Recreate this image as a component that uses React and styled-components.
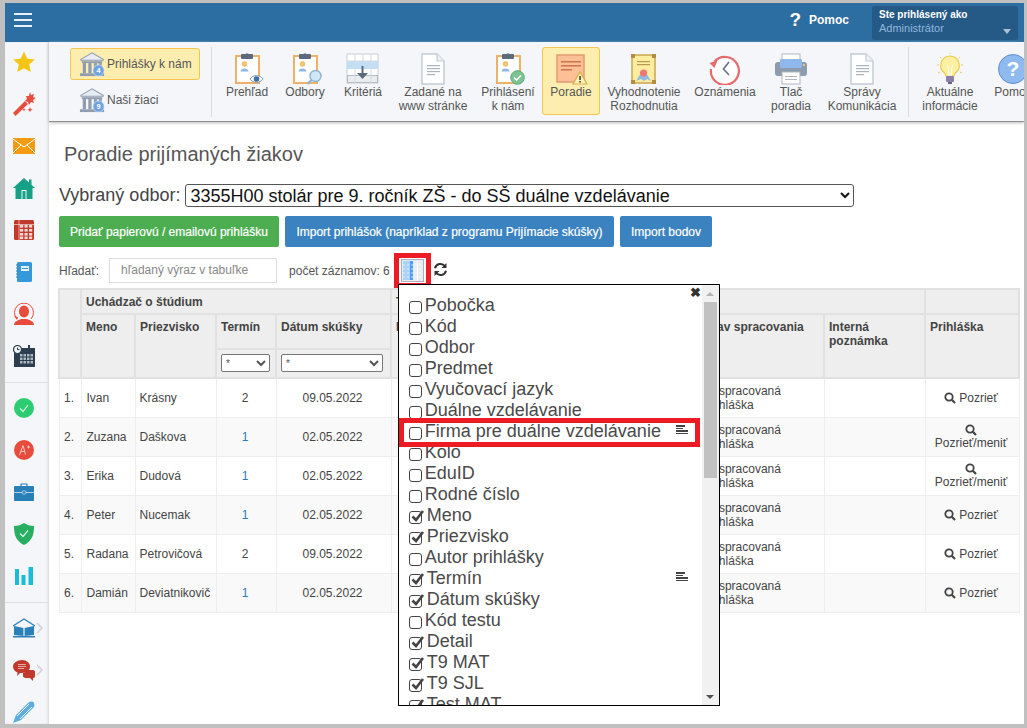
import React from "react";
import styled, { createGlobalStyle } from "styled-components";

const Global = createGlobalStyle`
  html, body { margin: 0; padding: 0; height: 100%; overflow: hidden; }
  body { font-family: "Liberation Sans", Arial, sans-serif; font-size: 12px; color: #444; background: #c0c0c0; }
  * { box-sizing: border-box; }
`;

const Frame = styled.div`
  width: 1027px; height: 728px; padding: 3px 3px 4px 5px; background: #c0c0c0; overflow: hidden;
`;
const Inner = styled.div`
  height: 100%; display: flex; flex-direction: column; background: #fff; overflow: hidden;
`;
const TopBar = styled.header`
  height: 39px; flex: none; background: #2c6da2; display: flex; align-items: center; padding-left: 9px; color: #fff;
`;
const Burger = styled.div`
  width: 18px; margin-bottom: 6px; display: flex; flex-direction: column; gap: 4px;
  span { display: block; height: 2px; background: #e8f0f6; }
`;
const TopHelp = styled.div`
  margin-left: auto; margin-bottom: 6px; display: flex; align-items: center; font-weight: bold; font-size: 12px; margin-right: 23px;
  i { font-style: normal; font-size: 19px; margin-right: 8px; }
`;
const UserBox = styled.div`
  position: relative; width: 146px; height: 34px; margin-right: 6px; background: #265a86; border-radius: 2px; padding: 2px 7px;
  b { display: block; font-size: 10px; line-height: 13px; color: #fff; }
  span { display: block; font-size: 11px; line-height: 15px; color: #8db6dc; }
  &::after { content: ""; position: absolute; right: 7px; bottom: 6px; border: 4px solid transparent; border-top: 5px solid #a9c3da; border-bottom: 0; }
`;
const Body = styled.div`
  flex: 1; display: flex; min-height: 0;
`;
const Side = styled.nav`
  width: 44px; flex: none; background: #f4f6f9; box-shadow: inset -2px 0 3px -1px #d5d5d5; display: flex; flex-direction: column; margin-top: 0;
`;
const SideGroup = styled.div`
  display: flex; flex-direction: column; padding: ${p => (p.$first ? "0" : "4px")} 0 ${p => (p.$last ? "0" : "5px")}; margin-top: ${p => (p.$first ? "-1px" : "0")};
  border-bottom: ${p => (p.$last ? "0" : "1px solid #dcdee1")};
`;
const SideItem = styled.div`
  height: 42px; display: flex; align-items: center; padding-left: 7px; flex: none;
`;
const IconSlot = styled.span`
  width: 24px; flex: none; display: flex; justify-content: center; align-items: center;
`;
const Main = styled.div`
  flex: 1; min-width: 0; display: flex; flex-direction: column;
`;
const Toolbar = styled.div`
  height: 80px; flex: none; background: #f4f6f9; border-bottom: 1px solid #8f8f8f; box-shadow: 0 1px 3px #bbb; display: flex; align-items: center; padding-left: 21px; overflow: hidden;
`;
const LeftTools = styled.div`
  width: 141px; flex: none; display: flex; flex-direction: column; gap: 4px;
`;
const WideBtn = styled.div`
  width: 130px; height: 32px; display: flex; align-items: center; padding-left: 8px; gap: 1px; border-radius: 3px; font-size: 12px;
  color: #555; background: ${p => (p.$on ? "#fdeeb0" : "transparent")}; border: 1px solid ${p => (p.$on ? "#f4c64f" : "transparent")};
`;
const Sep = styled.div`
  width: 1px; height: 70px; flex: none; background: #d9dbde; margin: ${p => p.$m};
`;
const Tool = styled.div`
  width: ${p => p.$w}px; height: 68px; margin-bottom: 2px; flex: none; display: flex; flex-direction: column; align-items: center; padding-top: 5px;
  font-size: 12px; line-height: 14px; text-align: center; color: #555; border-radius: 3px; white-space: nowrap;
  background: ${p => (p.$on ? "#fdeeb0" : "transparent")}; border: 1px solid ${p => (p.$on ? "#f4c64f" : "transparent")};
  svg { flex: none; }
`;
const Content = styled.main`
  flex: 1; padding: 0 0 0 10px; position: relative; min-height: 0;
`;
const Title = styled.h1`
  margin: 0; padding: 20px 0 0 5px; font-size: 20px; line-height: 24px; font-weight: normal; color: #555;
`;
const OdborRow = styled.div`
  margin-top: 18px; display: flex; align-items: center; height: 23px; font-size: 18px; color: #444;
`;
const OdborSelect = styled.select`
  width: 669px; height: 23px; margin-left: 5px; font-family: "Liberation Sans", Arial, sans-serif; font-size: 18px; color: #111; background: #fff; border: 1px solid #555; border-radius: 3px; padding: 0;
`;
const Buttons = styled.div`
  margin-top: 9px; display: flex; gap: 6px;
`;
const Btn = styled.div`
  height: 31px; display: flex; align-items: center; justify-content: center; width: ${p => p.$w}px; color: #fff; font-size: 12px; font-weight: 500;
  -webkit-text-stroke: 0.2px #fff; border-radius: 2px; background: ${p => (p.$green ? "#4cae50" : "#3a83c0")};
`;
const SearchRow = styled.div`
  margin-top: 11px; height: 25px; display: flex; align-items: center; color: #555; position: relative;
`;
const SearchInput = styled.div`
  width: 168px; height: 25px; margin-left: 10px; border: 1px solid #ddd; padding-left: 11px; line-height: 23px; color: #888;
`;
const Count = styled.span`
  margin-left: 12px;
`;
const ColumnsBtn = styled.div`
  position: relative; align-self: flex-start; width: 37px; height: 35px; margin: -5px 0 0 4px; flex: none; border: 5px solid #ed1c24; display: flex; align-items: center; justify-content: center;
`;
const Refresh = styled.div`
  margin: 0 0 3px 2px; display: flex;
`;
const TableWrap = styled.div`
  margin: 5px 0 0 -1px;
`;
const Table = styled.table`
  width: 960px; table-layout: fixed; border-collapse: collapse; border: 1px solid #e5e5e5;
`;
const Th = styled.th`
  background: #eee; border: 2px solid #e1e1e1; padding: ${p => (p.$filter ? "4px 4px 0" : "5px 4px 4px")}; vertical-align: top; text-align: left; font-size: 12px; line-height: 14px; color: #444; font-weight: bold; height: ${p => p.$h}px; white-space: ${p => (p.$wrap ? "normal" : "nowrap")}; overflow: hidden;
`;
const Td = styled.td`
  height: 39px; border: 1px solid #eee; padding: 0 6px 0 ${p => p.$pl || 4}px; font-size: 12px; line-height: 14px; color: #444; overflow: hidden; white-space: nowrap;
  text-align: ${p => p.$align || "left"}; background: ${p => (p.$odd ? "#f9f9f9" : "#fff")};
`;
const Link = styled.span`
  color: #337ab7;
`;
const FilterSelect = styled.select`
  display: block; width: ${p => p.$w}px; height: 18px; font-size: 10px; font-family: "Liberation Sans", Arial, sans-serif; background: #fff; border: 1px solid #767676; border-radius: 2px; padding: 0; color: #555;
`;
const View = styled.div`
  display: flex; justify-content: center; align-items: center; flex-direction: ${p => (p.$stack ? "column" : "row")};
  line-height: 14px; gap: ${p => (p.$stack ? "0" : "3px")};
`;
const Popup = styled.div`
  position: absolute; left: -1px; top: 26px; width: 322px; height: 422px; z-index: 5; background: #fff; border: 1px solid #000; display: flex;
`;
const List = styled.div`
  flex: 1; min-width: 0; padding: 10px 0 0 10px; overflow: hidden; position: relative;
`;
const CloseX = styled.div`
  position: absolute; right: 1px; top: 1px; font-size: 13px; line-height: 13px; font-weight: bold; color: #333;
`;
const Item = styled.div`
  height: 21px; display: flex; align-items: center; font-size: 18px; line-height: 21px; color: #4a4a4a; white-space: nowrap; position: relative; flex: none;
`;
const Box = styled.span`
  width: 13px; height: 13px; flex: none; margin: 3px ${p => (p.$checked ? 5 : 3)}px 0 0; border: 1px solid #444; border-radius: 3px; position: relative; background: #fff; display: inline-block;
  svg { position: absolute; left: 0; top: -3px; }
`;
const Lines = styled.span`
  position: absolute; right: 14px; top: 4px; display: flex; flex-direction: column; gap: 1px;
`;
const Line = styled.i`
  display: block; height: 1.5px; background: #444; width: ${p => p.$w}px;
`;
const Scrollbar = styled.div`
  width: 17px; flex: none; background: #f1f1f1; display: flex; flex-direction: column; align-items: center; padding: 0 2px;
`;
const Arrow = styled.div`
  height: 17px; flex: none; width: 100%; display: flex; align-items: center; justify-content: center;
  &::after { content: ""; border: 4px solid transparent; ${p => (p.$up ? "border-bottom: 4px solid #b5b5b5; border-top: 0;" : "border-top: 4px solid #505050; border-bottom: 0;")} }
`;
const Thumb = styled.div`
  width: 100%; height: 176px; background: #c1c1c1; flex: none;
`;
const Track = styled.div`
  flex: 1;
`;
const Highlight = styled.div`
  position: absolute; left: 0; top: 133px; width: 301px; height: 29px; border: 5px solid #ed1c24; z-index: 6; pointer-events: none;
`;

/* ---------- drawn icons ---------- */
const Bank = ({ n }) => (
  <svg width="27" height="26" viewBox="0 0 29 28">
    <path d="M2 9 14 2l12 7v1H2z" fill="#e8edf3" stroke="#8f9db0" strokeWidth="1.2" />
    <rect x="3" y="11" width="22" height="2" fill="#8f9db0" />
    {[4, 10, 16, 21].map(x => <rect key={x} x={x} y="13" width="3.5" height="11" fill="#8f9db0" />)}
    <rect x="1" y="24" width="26" height="3" fill="#8f9db0" />
    <circle cx="21" cy="21" r="6" fill="#6ea2e0" stroke="#dde8f6" strokeWidth=".7" />
    <text x="21" y="24" fontSize="8" fontWeight="bold" textAnchor="middle" fill="#fff" fontFamily="Liberation Sans">{n}</text>
  </svg>
);
const Clip = ({ children }) => (
  <svg width="34" height="32" viewBox="0 0 34 32">
    <rect x="6" y="3" width="23" height="27" fill="#fff" stroke="#eeb168" strokeWidth="2" />
    <rect x="11" y="1" width="12" height="5" rx="1" fill="#5d6a7c" />
    <circle cx="17" cy="1.8" r="1.6" fill="#5d6a7c" />
    <circle cx="14.5" cy="11" r="2.4" fill="#f6c66a" stroke="#d8a24c" strokeWidth=".5" />
    <path d="M10.500 18.500c0-4 8-4 8 0z" fill="#8db8e8" />
    {children}
  </svg>
);
const Doc = () => (
  <svg width="30" height="32" viewBox="0 0 30 32">
    <path d="M4 1h15l7 7v23H4z" fill="#fff" stroke="#c3cbd5" strokeWidth="1.5" />
    <path d="M19 1v7h7" fill="#eef1f4" stroke="#c3cbd5" strokeWidth="1.2" />
    {[12, 15, 18, 21].map((y, i) => <rect key={y} x="9" y={y} width={i === 3 ? 8 : 13} height="1.2" fill="#aab3bd" />)}
  </svg>
);
const GridIcon = () => (
  <svg width="34" height="32" viewBox="0 0 34 32">
    <rect x="1" y="1" width="31" height="29" fill="#fff" stroke="#c8ced6" />
    <rect x="1" y="8" width="31" height="8" fill="#c2def5" />
    <rect x="1" y="22" width="31" height="8" fill="#b6bcc4" />
    <rect x="2" y="23" width="29" height="6" fill="#e9edf0" />
    <path d="M9 1v29M17 1v9M25 1v29M1 8h31" stroke="#d5dae0" fill="none" />
    <path d="M16.5 13v11" stroke="#5d6a7c" strokeWidth="2" />
    <path d="M11 20l5.500 6 5.500-6z" fill="#5d6a7c" />
  </svg>
);
const PoradieIcon = () => (
  <svg width="34" height="32" viewBox="0 0 34 32">
    <rect x="3" y="2" width="27" height="27" fill="#fdbf95" stroke="#e39a72" strokeWidth="1.500" />
    <rect x="7" y="8" width="20" height="1.500" fill="#c9774f" />
    <rect x="7" y="12" width="20" height="1.500" fill="#c9774f" />
    <rect x="7" y="16" width="11" height="1.500" fill="#c9774f" />
    <path d="M26 19l7 12H19z" fill="#fdf2b5" stroke="#d8ad4a" strokeWidth="1.200" />
    <rect x="25.300" y="23" width="1.500" height="4" fill="#333" />
    <rect x="25.300" y="28" width="1.500" height="1.500" fill="#333" />
  </svg>
);
const CertIcon = () => (
  <svg width="30" height="32" viewBox="0 0 30 32">
    <rect x="3" y="2" width="23" height="28" fill="#fdeda0" stroke="#c8a04a" strokeWidth="1.400" />
    <rect x="2" y="1" width="4" height="4" fill="#b38c3e" />
    <rect x="23" y="1" width="4" height="4" fill="#b38c3e" />
    <rect x="2" y="27" width="4" height="4" fill="#b38c3e" />
    <rect x="23" y="27" width="4" height="4" fill="#b38c3e" />
    <rect x="8" y="8" width="13" height="1.200" fill="#b79a52" />
    <rect x="8" y="11" width="13" height="1.200" fill="#b79a52" />
    <path d="M7 28l5-8h5l5 8-4-2-3 2-3-2z" fill="#8dbbe6" />
    <circle cx="14.500" cy="20" r="3.500" fill="#ee7674" />
  </svg>
);
const ClockIcon = () => (
  <svg width="34" height="32" viewBox="0 0 34 32">
    <path d="M6.500 8.500A14 14 0 1 1 3 16" fill="#fff" stroke="#e9686a" strokeWidth="2.200" />
    <path d="M1.500 10l8-2.500-3 7.500z" fill="#e9686a" />
    <path d="M21 9l-5.500 7 5.500 6" fill="none" stroke="#6a7889" strokeWidth="1.700" />
  </svg>
);
const Printer = () => (
  <svg width="34" height="32" viewBox="0 0 34 32">
    <rect x="8" y="1" width="18" height="9" fill="#fff" stroke="#aeb7c2" />
    <rect x="1" y="9" width="32" height="14" rx="3" fill="#8c9bad" />
    <rect x="6" y="6" width="22" height="9" rx="1" fill="#8fb9ec" />
    <rect x="8" y="19" width="18" height="12" fill="#fff" stroke="#aeb7c2" />
    <rect x="11" y="23" width="12" height="1" fill="#aeb7c2" />
    <rect x="11" y="26" width="12" height="1" fill="#aeb7c2" />
    <circle cx="30" cy="12" r="1" fill="#f3d76a" />
  </svg>
);
const Bulb = () => (
  <svg width="34" height="32" viewBox="0 0 34 32">
    <path d="M17 3a9.500 9.500 0 0 0-5.500 17c.8.8 1.500 2 1.500 3h8c0-1 .7-2.200 1.500-3A9.500 9.500 0 0 0 17 3z" fill="#fdf0a0" stroke="#e8cc58" strokeWidth="1.200" />
    <path d="M14 12c1.500 2 1.500 6 2 11M20 12c-1.500 2-1.500 6-2 11" stroke="#fff" fill="none" />
    <rect x="13" y="23" width="8" height="6" rx="1" fill="#8c7fa8" />
    <rect x="15" y="29" width="4" height="2" fill="#6e628a" />
    <path d="M4 12h2M28 12h2M7 4l1.500 1.500M27 4l-1.500 1.500M17 0v1M5 20l2-1M29 20l-2-1" stroke="#e8cc58" />
  </svg>
);
const HelpCircle = () => (
  <svg width="32" height="32" viewBox="0 0 32 32">
    <circle cx="16" cy="16" r="14.500" fill="#8ebaf0" stroke="#5e8fd0" />
    <text x="16" y="23" fontSize="21" fontWeight="bold" textAnchor="middle" fill="#fff" fontFamily="Liberation Sans">?</text>
  </svg>
);
const Magnifier = ({ size = 12 }) => (
  <svg width={size} height={size} viewBox="0 0 12 12">
    <circle cx="5" cy="5" r="3.700" fill="none" stroke="#444" strokeWidth="1.800" />
    <path d="M7.800 7.800 11 11" stroke="#444" strokeWidth="2.200" />
  </svg>
);

const Star = () => (<svg width="24" height="24" viewBox="0 0 24 24"><path d="M12 1.500l3.200 7 7.600.9-5.600 5.200 1.500 7.500L12 18.300 5.300 22.100l1.500-7.500L1.200 9.400l7.600-.9z" fill="#f5c516" /></svg>);
const Wand = () => (<svg width="24" height="24" viewBox="0 0 24 24"><path d="M1 21 13 9l3 3L3.500 24z" fill="#e74c3c" /><path d="M18 0l1 3 3-1-1 3 3 1-3 2 1 3-3-1-2 3-1-3-3-1 2-2-1-3 3 0z" fill="#e74c3c" /><path d="M18 15l.7 2 2 .7-2 .7-.7 2-.7-2-2-.7 2-.7zM12 16l.5 1.300 1.300.5-1.300.5-.5 1.300-.5-1.300-1.300-.5 1.300-.5z" fill="#e74c3c" /></svg>);
const Mail = () => (<svg width="22" height="16" viewBox="0 0 22 16"><rect width="22" height="16" fill="#f39c12" /><path d="M0 1l11 8 11-8M0 15l8-8M22 15l-8-8" fill="none" stroke="#fff" strokeWidth="1" /></svg>);
const House = () => (<svg width="22" height="21" viewBox="0 0 22 21"><path d="M11 0l5 4.500V1.500h2.500v5.300L22 10h-2.500v11h-17V10H0z" fill="#16a085" /><rect x="8.500" y="12" width="5" height="9" fill="#f4f6f9" /><rect x="9.500" y="13" width="3" height="8" fill="#16a085" /></svg>);
const RedCal = () => (<svg width="20" height="20" viewBox="0 0 20 20"><rect width="20" height="20" rx="1.500" fill="#c0392b" />{[6, 10.500, 15].map(x => [5, 9, 13, 16.500].map(y => <rect key={x + "-" + y} x={x} y={y} width="3.200" height="2.600" fill="#f0d8d5" />))}<path d="M0 4.500h20M5 0v20" stroke="#f4f6f9" strokeWidth=".6" /></svg>);
const Notebook = () => (<svg width="16" height="20" viewBox="0 0 16 20"><rect x="1" y="0" width="15" height="20" rx="1.500" fill="#3498db" /><rect x="5" y="4" width="8" height="5" fill="#e8f3fb" /><rect x="6" y="6" width="6" height="1" fill="#3498db" /><path d="M0 3h2M0 6h2M0 9h2M0 12h2M0 15h2" stroke="#2a7cb5" strokeWidth="1" /></svg>);
const Person = () => (<svg width="22" height="22" viewBox="0 0 22 22"><path d="M4 16a9.500 9.500 0 1 1 14 0" fill="none" stroke="#e74c3c" strokeWidth="1" /><ellipse cx="11" cy="8.500" rx="5" ry="6" fill="#e74c3c" /><path d="M1 22c0-4 5-5 7-6h6c2 1 7 2 7 6z" fill="#e74c3c" /><path d="M1 13l3 4 1-3z" fill="#e74c3c" /></svg>);
const DarkCal = () => (<svg width="22" height="22" viewBox="0 0 22 22"><rect x="1" y="3" width="21" height="19" fill="#2c3e50" />{[9, 12.500, 16].map(y => [7, 10.500, 14, 17.500].map(x => <rect key={x + "-" + y} x={x} y={y} width="2.500" height="2.500" fill="#aeb6bf" />))}<circle cx="4.500" cy="4.500" r="4" fill="#f4f6f9" stroke="#2c3e50" strokeWidth="1.200" /><path d="M4.500 2.500v2.200h2" fill="none" stroke="#2c3e50" /><rect x="15" y="0" width="2" height="5" fill="#2c3e50" /></svg>);
const CheckCircle = () => (<svg width="20" height="20" viewBox="0 0 20 20"><circle cx="10" cy="10" r="10" fill="#2ecc71" /><path d="M6 10.500l3 3 5-6.500" fill="none" stroke="#d5f5e3" strokeWidth="1.200" /></svg>);
const APlus = () => (<svg width="20" height="20" viewBox="0 0 20 20"><circle cx="10" cy="10" r="10" fill="#e74c3c" /><path d="M5.500 15 9 5.500l2.500 9M6.800 11.500h4M13 7h3M14.500 5.500v3" fill="none" stroke="#f6c8c2" strokeWidth="1" /></svg>);
const Case = () => (<svg width="20" height="18" viewBox="0 0 20 18"><path d="M7 3V1h6v2" fill="none" stroke="#2980b9" strokeWidth="1.200" /><rect y="3" width="20" height="15" rx="1" fill="#2980b9" /><path d="M0 9.500h20" stroke="#d6e7f3" strokeWidth=".8" /><rect x="8" y="8" width="4" height="3" rx="1" fill="#2980b9" stroke="#d6e7f3" strokeWidth=".7" /></svg>);
const Shield = () => (<svg width="20" height="22" viewBox="0 0 20 22"><path d="M10 0c3 2 6 3 10 3 0 9-2 15-10 19C2 18 0 12 0 3c4 0 7-1 10-3z" fill="#27ae60" /><path d="M6 10.500l3 3 5-6" fill="none" stroke="#d5f5e3" strokeWidth="1.200" /></svg>);
const Bars = () => (<svg width="18" height="18" viewBox="0 0 18 18"><rect y="2" width="4" height="16" fill="#1abcd8" /><rect x="6.500" y="8" width="4" height="10" fill="#1abcd8" /><rect x="13.500" y="0" width="4.500" height="18" fill="#1abcd8" /></svg>);
const Chevron = () => (<svg width="7" height="14" viewBox="0 0 7 14"><path d="M1 2l5 5-5 5" fill="none" stroke="#ccd0d5" strokeWidth="1.500" /></svg>);
const Book = () => (<svg width="22" height="20" viewBox="0 0 22 20"><path d="M0 8 11 1l11 7" fill="none" stroke="#2980b9" strokeWidth="1.300" /><path d="M1 8l9.400 2v8L1 17zM21 8l-9.400 2v8l9.400-1z" fill="#2980b9" /><rect x="0" y="18" width="22" height="1.500" fill="#2980b9" /></svg>);
const Chat = () => (<svg width="22" height="21" viewBox="0 0 22 21"><path d="M9 0c5 0 8 3 8 6.500S14 13 9 13H7l-3 3 .5-3.500C2 11.500 0 9.500 0 6.500 0 3 4 0 9 0z" fill="#c0392b" /><path d="M13 10h7c1.500 0 2 1 2 2v4c0 1-.5 2-2 2v3l-3-3h-4c-2 0-3-1-3-2v-3c2 0 3-2 3-3z" fill="#c0392b" /><path d="M5 4.500h8M5 6.500h8M5 8.500h6" stroke="#eec5c0" strokeWidth=".8" /></svg>);
const Pen = () => (<svg width="22" height="22" viewBox="0 0 22 22"><path d="M0 22l3-8L15 2c2-2 5-2 6 0s0 4-1 5L8 19z" fill="#5dade2" /><path d="M4 15 16 3M7 18 19 6" stroke="#f4f6f9" strokeWidth="1" /></svg>);

const ColIcon = () => (
  <svg width="23" height="23" viewBox="0 0 23 23">
    <rect x=".5" y=".5" width="22" height="22" fill="#e8ebef" stroke="#a9b2bc" />
    <rect x="2" y="2" width="7" height="19" fill="#a8d2f7" />
    <rect x="9" y="2" width="3" height="19" fill="#4c9eec" />
    <path d="M2 6h19M2 10h19M2 14h19M2 18h19" stroke="#fff" strokeOpacity=".7" strokeDasharray="2 2" />
    <path d="M16.500 2v19" stroke="#fff" strokeOpacity=".8" />
  </svg>
);
const RefreshIcon = () => (
  <svg width="15" height="15" viewBox="0 0 15 15">
    <path d="M2 6.300A5.600 5.600 0 0 1 12 4.300" fill="none" stroke="#333" strokeWidth="2" />
    <path d="M13.500 1v5h-5z" fill="#333" />
    <path d="M13 8.700A5.600 5.600 0 0 1 3 10.700" fill="none" stroke="#333" strokeWidth="2" />
    <path d="M1.500 14V9h5z" fill="#333" />
  </svg>
);
const Tick = () => (
  <svg width="15" height="14" viewBox="0 0 15 14"><path d="M2.500 7.500 6 11l7-9" fill="none" stroke="#444" strokeWidth="2.600" /></svg>
);

const tools = [
  { w: 58, l: ["Prehľad"], icon: <Clip><path d="M20 26c3-4.500 10-4.500 13 0-3 4.500-10 4.500-13 0z" fill="#fff" stroke="#8a9aa8" /><circle cx="26.500" cy="26" r="2.800" fill="#3f6fa8" /></Clip> },
  { w: 58, l: ["Odbory"], icon: <Clip><circle cx="27.500" cy="23" r="5.500" fill="#cfe7f8" stroke="#8fb3cf" strokeWidth="1.400" /><path d="M23.500 27l-4 4" stroke="#8fb3cf" strokeWidth="2.400" /></Clip> },
  { w: 58, l: ["Kritériá"], icon: <GridIcon /> },
  { w: 82, l: ["Zadané na", "www stránke"], icon: <Doc /> },
  { w: 68, l: ["Prihlásení", "k nám"], icon: <Clip><circle cx="26.500" cy="24.500" r="6.800" fill="#7bc492" stroke="#5aa874" /><path d="M23 24.500l2.500 2.500 4.500-4.500" fill="none" stroke="#fff" strokeWidth="1.600" /></Clip> },
  { w: 58, l: ["Poradie"], on: true, icon: <PoradieIcon /> },
  { w: 88, l: ["Vyhodnotenie", "Rozhodnutia"], icon: <CertIcon /> },
  { w: 74, l: ["Oznámenia"], icon: <ClockIcon /> },
  { w: 58, l: ["Tlač", "poradia"], icon: <Printer /> },
  { w: 84, l: ["Správy", "Komunikácia"], icon: <Doc /> },
];

const sideGroups = [
  [[<Star />], [<Wand />], [<Mail />], [<House />], [<RedCal />], [<Notebook />], [<Person />], [<DarkCal />]],
  [[<CheckCircle />], [<APlus />], [<Case />], [<Shield />], [<Bars />]],
  [[<Book />, true], [<Chat />, true], [<Pen />]],
];

const rows = [
  ["Ivan", "Krásny", 2, "09.05.2022", false],
  ["Zuzana", "Daškova", 1, "02.05.2022", true],
  ["Erika", "Dudová", 1, "02.05.2022", true],
  ["Peter", "Nucemak", 1, "02.05.2022", false],
  ["Radana", "Petrovičová", 2, "09.05.2022", false],
  ["Damián", "Deviatnikovič", 1, "02.05.2022", false],
];

const columns = [
  ["Pobočka"], ["Kód"], ["Odbor"], ["Predmet"], ["Vyučovací jazyk"], ["Duálne vzdelávanie"],
  ["Firma pre duálne vzdelávanie", false, true], ["Kolo"], ["EduID"], ["Rodné číslo"],
  ["Meno", true], ["Priezvisko", true], ["Autor prihlášky"], ["Termín", true, true],
  ["Dátum skúšky", true], ["Kód testu"], ["Detail", true], ["T9 MAT", true], ["T9 SJL", true], ["Test MAT", true],
];

const colWidths = [22, 54, 81, 60, 115, 60, 80, 80, 89, 124, 101, 94];

export default function App() {
  return (
    <Frame>
      <Global />
      <Inner>
        <TopBar>
          <Burger><span /><span /><span /></Burger>
          <TopHelp><i>?</i>Pomoc</TopHelp>
          <UserBox><b>Ste prihlásený ako</b><span>Administrátor</span></UserBox>
        </TopBar>
        <Body>
          <Side>
            {sideGroups.map((g, i) => (
              <SideGroup key={i} $first={i === 0} $last={i === 2}>
                {g.map(([ic, more], j) => (
                  <SideItem key={j}>
                    <IconSlot>{ic}</IconSlot>
                    {more && <Chevron />}
                  </SideItem>
                ))}
              </SideGroup>
            ))}
          </Side>
          <Main>
            <Toolbar>
              <LeftTools>
                <WideBtn $on><Bank n="4" />Prihlášky k nám</WideBtn>
                <WideBtn><Bank n="9" />Naši žiaci</WideBtn>
              </LeftTools>
              <Sep $m="0 6px 0 0" />
              {tools.map(t => (
                <Tool key={t.l[0]} $w={t.w} $on={t.on}>
                  {t.icon}
                  {t.l.map(x => <span key={x}>{x}</span>)}
                </Tool>
              ))}
              <Sep $m="0 3px 0 4px" />
              <Tool $w={76}><Bulb /><span>Aktuálne</span><span>informácie</span></Tool>
              <Tool $w={50}><HelpCircle /><span>Pomoc</span></Tool>
            </Toolbar>
            <Content>
              <Title>Poradie prijímaných žiakov</Title>
              <OdborRow>
                Vybraný odbor:
                <OdborSelect defaultValue="a"><option value="a">3355H00 stolár pre 9. ročník ZŠ - do SŠ duálne vzdelávanie</option></OdborSelect>
              </OdborRow>
              <Buttons>
                <Btn $green $w={220}>Pridať papierovú / emailovú prihlášku</Btn>
                <Btn $w={329}>Import prihlášok (napríklad z programu Prijímacie skúšky)</Btn>
                <Btn $w={92}>Import bodov</Btn>
              </Buttons>
              <SearchRow>
                Hľadať:
                <SearchInput>hľadaný výraz v tabuľke</SearchInput>
                <Count>počet záznamov: 6</Count>
                <ColumnsBtn>
                  <ColIcon />
                  <Popup>
                    <List>
                      <CloseX>✖</CloseX>
                      {columns.map(([name, checked, lines]) => (
                        <Item key={name}>
                          <Box $checked={checked}>{checked && <Tick />}</Box>
                          {name}
                          {lines && <Lines><Line $w={9} /><Line $w={7} /><Line $w={12} /><Line $w={12} /></Lines>}
                        </Item>
                      ))}
                    </List>
                    <Scrollbar>
                      <Arrow $up />
                      <Thumb />
                      <Track />
                      <Arrow />
                    </Scrollbar>
                    <Highlight />
                  </Popup>
                </ColumnsBtn>
                <Refresh><RefreshIcon /></Refresh>
              </SearchRow>
              <TableWrap>
                <Table>
                  <colgroup>{colWidths.map((w, i) => <col key={i} style={{ width: w }} />)}</colgroup>
                  <thead>
                    <tr>
                      <Th rowSpan={3} />
                      <Th colSpan={4} $h={25}>Uchádzač o štúdium</Th>
                      <Th colSpan={4}>Testy</Th>
                      <Th colSpan={2} />
                      <Th />
                    </tr>
                    <tr>
                      <Th rowSpan={2}>Meno</Th>
                      <Th rowSpan={2}>Priezvisko</Th>
                      <Th $h={35}>Termín</Th>
                      <Th>Dátum skúšky</Th>
                      <Th rowSpan={2}>Detail</Th>
                      <Th rowSpan={2}>T9 MAT</Th>
                      <Th rowSpan={2}>T9 SJL</Th>
                      <Th rowSpan={2}>Test MAT</Th>
                      <Th rowSpan={2}>Stav spracovania</Th>
                      <Th rowSpan={2} $wrap>Interná poznámka</Th>
                      <Th rowSpan={2}>Prihláška</Th>
                    </tr>
                    <tr>
                      <Th $filter $h={29}><FilterSelect $w={49}><option>*</option></FilterSelect></Th>
                      <Th $filter><FilterSelect $w={102}><option>*</option></FilterSelect></Th>
                    </tr>
                  </thead>
                  <tbody>
                    {rows.map((r, i) => (
                      <tr key={r[0]}>
                        <Td $odd={i % 2} $align="center">{i + 1}.</Td>
                        <Td $odd={i % 2} $pl={5}>{r[0]}</Td>
                        <Td $odd={i % 2}>{r[1]}</Td>
                        <Td $odd={i % 2} $align="center">{r[2] === 1 ? <Link>1</Link> : r[2]}</Td>
                        <Td $odd={i % 2} $align="center">{r[3]}</Td>
                        <Td $odd={i % 2} />
                        <Td $odd={i % 2} />
                        <Td $odd={i % 2} />
                        <Td $odd={i % 2} />
                        <Td $odd={i % 2} $pl={5}>nespracovaná<br />prihláška</Td>
                        <Td $odd={i % 2} />
                        <Td $odd={i % 2} $align="center">
                          {r[4]
                            ? <View $stack><Magnifier />Pozrieť/meniť</View>
                            : <View><Magnifier />Pozrieť</View>}
                        </Td>
                      </tr>
                    ))}
                  </tbody>
                </Table>
              </TableWrap>
            </Content>
          </Main>
        </Body>
      </Inner>
    </Frame>
  );
}
